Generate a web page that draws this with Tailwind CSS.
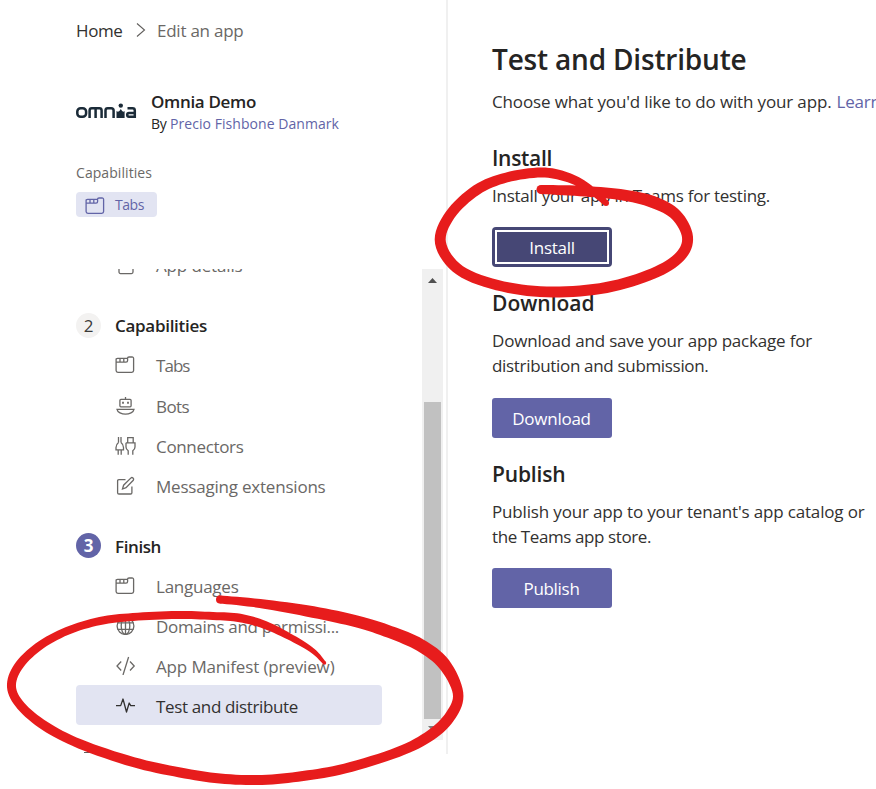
<!DOCTYPE html>
<html lang="en">
<head>
<meta charset="utf-8">
<title>Test and Distribute</title>
<script src="https://cdn.jsdelivr.net/npm/@tailwindcss/browser@4"></script>
</head>
<body class="relative h-[789px] w-[876px] overflow-hidden bg-white font-['Open_Sans','Noto_Sans',sans-serif] text-[17px] whitespace-nowrap text-[#252423]">
<svg class="hidden">
  <symbol id="tabs" viewBox="0 0 20 18" fill="none" stroke="currentColor" stroke-width="1.3">
    <path d="M1.1 2.6V14.6Q1.1 16.4 2.9 16.4H16.8Q18.6 16.4 18.6 14.6V2.6Q18.6 1 17 1H14Q12.6 1 12.4 2.4H2.6Q1.1 2.4 1.1 3.8M1.1 6.2H11Q12.6 6.2 12.6 4.6V2.4M5 2.4V6.2M8.8 2.4V6.2"/>
  </symbol>
</svg>
<div class="flex h-[754px]">
  <aside class="flex w-[448px] shrink-0 flex-col border-r-2 border-[#f0f0f0] pl-[76px]">
    <nav class="flex h-[62px] items-center">
      <span class="w-[60px] tracking-[-0.387px] text-[#323130]">Home</span>
      <svg class="mr-[11px] h-4 w-[10px] -translate-y-px" viewBox="0 0 10 16" fill="none" stroke="#605e5c" stroke-width="1.1"><path d="M1 1.5 8.500 8 1 14.5"/></svg>
      <span class="tracking-[-0.241px] text-[#6a6866]">Edit an app</span>
    </nav>
    <div class="mt-[29px] flex h-[42px] items-center">
      <svg class="mr-[14px] h-[16px] w-[61px] -translate-y-px" viewBox="0 0 61 16" fill="none" stroke="#1b2b38" stroke-width="2.5">
        <rect x="1.3" y="5.2" width="8.8" height="8.6" rx="3.4"/>
        <path d="M13.6 15V7.4Q13.6 5.2 15.8 5.2H23.4Q25.6 5.2 25.6 7.4V15M19.6 5.2V15M29.5 15V7.4Q29.5 5.2 31.7 5.2H35.2Q37.6 5.2 37.6 7.6V15"/>
        <circle cx="44.8" cy="2.6" r="2.2" fill="#1b2b38" stroke="none"/>
        <path d="M40.500 15V8Q42.8 10 44.8 6Q46.8 10 48.600 8V15Z" fill="#1b2b38" stroke="none"/>
        <path d="M51.5 5.2H56.5Q58.8 5.2 58.8 7.4V13.8H53Q51.2 13.8 51.2 11.8Q51.2 9.9 53 9.9H58.8"/>
      </svg>
      <div class="flex flex-col">
        <span class="h-[22px] leading-[22px] font-semibold tracking-[-0.328px]">Omnia Demo</span>
        <span class="h-[20px] text-[14px] leading-[22px]"><span class="tracking-[-0.234px]">By </span><span class="tracking-[0.055px] text-[#6264a7]">Precio Fishbone Danmark</span></span>
      </div>
    </div>
    <div class="mt-[30px] h-[20px] text-[14px] leading-[20px] tracking-[0.069px] text-[#6a6866]">Capabilities</div>
    <div class="mt-[9px] flex h-[25px] w-[81px] items-center rounded bg-[#e2e4f2] pl-[9px] text-[14px] text-[#6264a7]">
      <svg class="mt-[2px] mr-[10px] h-[18px] w-[20px]"><use href="#tabs"/></svg><span class="tracking-[-0.434px]">Tabs</span>
    </div>
    <div class="mt-[52px] flex h-[485px]">
      <div class="h-full w-[346px] overflow-hidden text-[#6a6866]">
        <div class="-mt-6 flex h-10 items-center pl-10">
          <svg class="mr-5 h-[20px] w-[20px]" viewBox="0 0 20 20" fill="none" stroke="currentColor" stroke-width="1.3"><rect x="3" y="3" width="14" height="15.6" rx="1.5"/></svg>
          <span class="pt-[2px] tracking-[-0.146px]">App details</span>
        </div>
        <div class="mt-5 flex h-10 items-center text-[#252423]">
          <span class="mr-[14px] flex size-[25px] items-center justify-center rounded-full bg-[#f3f2f1] pt-px text-[#3b3a39]">2</span>
          <span class="pt-[2px] font-semibold tracking-[-0.290px]">Capabilities</span>
        </div>
        <div class="flex h-10 items-center pl-[39px]">
          <svg class="mr-[21px] h-[18px] w-[20px]"><use href="#tabs"/></svg><span class="pt-[2px] tracking-[-0.953px]">Tabs</span>
        </div>
        <div class="flex h-10 items-center pl-10">
          <svg class="mt-px mr-5 h-[20px] w-[20px]" viewBox="0 0 20 20" fill="none" stroke="currentColor" stroke-width="1.3"><path d="M9.5 1v2.5"/><rect x="3.9" y="3.4" width="11.2" height="7.4" rx="1"/><path d="M1 13.3H18Q17.6 15.5 15 16.9Q12.5 18.2 9.5 18.2Q6.5 18.2 4 16.9Q1.4 15.5 1 13.3Z"/><path d="M6.1 6.8h1.8M11.1 6.8h1.8" stroke-width="2"/></svg>
          <span class="pt-1 tracking-[-0.594px]">Bots</span>
        </div>
        <div class="flex h-10 items-center pl-[39px]">
          <svg class="mt-[2px] mr-5 h-[20px] w-[21px]" viewBox="0 0 21 20" fill="none" stroke="currentColor" stroke-width="1.3"><path d="M3.5 1V6.5M6 1V6.5M3.5 6.5Q1 8.5 1 11.5V13.8H8.5V11.5Q8.5 8.5 6 6.5M3.2 14V18.8M6.2 14V18.800M12.7 6.8V1.6H18.2V6.8M11 6.8H20V11Q20 13.2 17.8 14.8V18.8M11 6.8V11Q11 13.2 13.2 14.8V18.8"/></svg>
          <span class="pt-1 tracking-[-0.331px]">Connectors</span>
        </div>
        <div class="flex h-10 items-center pl-10">
          <svg class="mt-[2px] mr-5 h-[20px] w-[20px]" viewBox="0 0 20 20" fill="none" stroke="currentColor" stroke-width="1.3"><path d="M9.5 3.6H2.9Q1.6 3.6 1.6 4.9V16.7Q1.6 18 2.9 18H14.6Q15.9 18 15.9 16.7V10.5M6.5 13 7.6 9.2 15 1.9Q15.9 1.1 17 2Q18.2 3.2 17.3 4.3L10 11.7Z"/></svg>
          <span class="pt-1 tracking-[-0.210px]">Messaging extensions</span>
        </div>
        <div class="mt-5 flex h-10 items-center text-[#252423]">
          <span class="mr-[14px] flex size-[25px] items-center justify-center rounded-full bg-[#6264a7] pt-px font-bold text-white">3</span>
          <span class="pt-1 font-semibold tracking-[-0.400px]">Finish</span>
        </div>
        <div class="flex h-10 items-center pl-[39px]">
          <svg class="mt-[2px] mr-[21px] h-[18px] w-[20px]"><use href="#tabs"/></svg><span class="pt-1 tracking-[-0.248px]">Languages</span>
        </div>
        <div class="flex h-10 items-center pl-10">
          <svg class="mr-5 h-[20px] w-[20px]" viewBox="0 0 20 20" fill="none" stroke="currentColor" stroke-width="1.3"><circle cx="9.5" cy="11" r="8.4"/><ellipse cx="9.5" cy="11" rx="4.3" ry="8.4"/><path d="M9.5 2v18M1.5 7.9H17.5M1.5 14.3H17.5"/></svg>
          <span class="pt-1 tracking-[-0.326px]">Domains and permissi...</span>
        </div>
        <div class="flex h-10 items-center pl-10">
          <svg class="mr-5 h-[20px] w-[20px]" viewBox="0 0 20 20" fill="none" stroke="currentColor" stroke-width="1.3"><path d="M5.2 6.5 1 11 5.2 15.5M14 6.5 18.200 11 14 15.5M12.6 2 7 20"/></svg>
          <span class="pt-1 tracking-[-0.145px]">App Manifest (preview)</span>
        </div>
        <div class="flex h-10 w-[306px] items-center rounded bg-[#e2e4f2] pl-10 text-[#323130]">
          <svg class="mr-5 h-[20px] w-[20px]" viewBox="0 0 20 20" fill="none" stroke="currentColor" stroke-width="1.3" stroke-linejoin="round"><path d="M0 10.6H4.7L7 4 10.5 17 13.2 8 14.7 10.6H19"/></svg>
          <span class="pt-1 tracking-[-0.353px]">Test and distribute</span>
        </div>
        <div class="mt-[27px] ml-2 h-px w-3 bg-[#605e5c]"></div>
      </div>
      <div class="flex h-[471px] w-[21px] flex-col items-center bg-[#f0f0f0] pt-[9px] pb-2">
        <svg class="h-[5px] w-[9px]" viewBox="0 0 9 5"><path d="M0 5 4.5 0 9 5Z" fill="#505050"/></svg>
        <div class="mt-[119px] h-[317px] w-[17px] bg-[#c1c1c1]"></div>
        <svg class="mt-[7px] h-[5px] w-[9px]" viewBox="0 0 9 5"><path d="M0 0H9L4.5 5Z" fill="#7d7d7d"/></svg>
      </div>
    </div>
  </aside>
  <main class="flex w-[428px] flex-col overflow-hidden pl-11 text-[#323130]">
    <h1 class="mt-[39px] h-[40px] text-[28px] leading-[40px] font-semibold tracking-[-0.185px] text-[#252423]">Test and Distribute</h1>
    <p class="mt-[10px] h-[25px] leading-[25px]"><span class="tracking-[-0.145px]">Choose what you'd like to do with your app.</span><span class="ml-[5px] tracking-[-0.200px] text-[#6264a7]">Learn more</span></p>
    <h2 class="mt-[29px] h-[30px] text-[21px] leading-[30px] font-semibold tracking-[-0.310px] text-[#252423]">Install</h2>
    <p class="mt-[10px] h-[25px] leading-[25px] tracking-[-0.269px]">Install your app in Teams for testing.</p>
    <button class="mt-[19px] h-10 w-[120px] rounded-[4px] bg-[#464775] p-[3px] text-white"><span class="flex h-full items-center justify-center border-2 border-white pt-px tracking-[-0.268px]">Install</span></button>
    <h2 class="mt-[21px] h-[30px] text-[21px] leading-[30px] font-semibold text-[#252423]">Download</h2>
    <p class="mt-[10px] leading-[25px]"><span class="tracking-[-0.192px]">Download and save your app package for</span><br><span class="tracking-[-0.325px]">distribution and submission.</span></p>
    <button class="mt-[20px] flex h-10 w-[120px] items-center justify-center rounded-[3px] bg-[#6264a7] pt-px pr-px tracking-[-0.254px] text-white">Download</button>
    <h2 class="mt-[21px] h-[30px] text-[21px] leading-[30px] font-semibold tracking-[-0.160px] text-[#252423]">Publish</h2>
    <p class="mt-[10px] leading-[25px]"><span class="tracking-[-0.163px]">Publish your app to your tenant's app catalog or</span><br><span class="tracking-[-0.404px]">the Teams app store.</span></p>
    <button class="mt-[19px] flex h-10 w-[120px] items-center justify-center rounded-[3px] bg-[#6264a7] pt-px pr-px tracking-[-0.310px] text-white">Publish</button>
  </main>
</div>
<svg class="pointer-events-none absolute top-0 left-0 h-[789px] w-[876px]" viewBox="0 0 876 789" id="ink" fill="#e71c1c"></svg>
<script>
// Hand-drawn marker strokes: each point is x, y, pen width.
const strokes = [
  [[220,599.5,8],[260,603.5,9],[313,612,11.5],[357,621.5,12],[390,632,12.5],[420,645,13],[444,664,12.5],[458,693,10.5],[451,715,11],[431,735,11],[398,752,10],[345,768.5,10],[303,776,10],[262,780,10],[220,778.5,10],[180,772.5,10],[133,762,10],[80,744,9.5],[45,726,9.5],[21,706,9],[11.5,687,9],[18,667,9],[38,647,8.5],[67,631,8],[100,621,8],[133,617,8],[177,615,8],[213,616,8],[240,618,8.5],[265,625,8],[292,638,6.5],[313,651,5],[324.5,663,3.5]],
  [[541,189.5,9],[580,191,10.5],[620,194.5,11],[653,202,12],[676,215,11.5],[687.5,237,11],[680,256.5,11],[653,273.5,11],[606.5,287.5,11],[553,292,11],[503,286.5,10.5],[460,270.5,10.5],[440.5,243,11],[450,215,10.5],[476.5,190,10.5],[506.5,177.5,10],[541.5,172.5,10],[566.5,177,9.5],[587,187,8],[606,203,6]]
];
const ns = 'http://www.w3.org/2000/svg', ink = document.getElementById('ink');
for (const p of strokes) {
  const s = [];
  for (let i = 0; i < p.length - 1; i++) {
    const a = p[Math.max(i - 1, 0)], b = p[i], c = p[i + 1], d = p[Math.min(i + 2, p.length - 1)];
    for (let n = 0; n < 8; n++) {
      const t = n / 8;
      s.push([0, 1, 2].map(k => 0.5 * (2 * b[k] + (c[k] - a[k]) * t + (2 * a[k] - 5 * b[k] + 4 * c[k] - d[k]) * t * t + (3 * b[k] - a[k] - 3 * c[k] + d[k]) * t * t * t)));
    }
  }
  s.push(p[p.length - 1]);
  const left = [], right = [];
  s.forEach((q, i) => {
    const u = s[Math.max(i - 1, 0)], v = s[Math.min(i + 1, s.length - 1)];
    const dx = v[0] - u[0], dy = v[1] - u[1], l = Math.hypot(dx, dy), h = q[2] / 2;
    left.push([q[0] - dy / l * h, q[1] + dx / l * h].map(n => n.toFixed(2)));
    right.unshift([q[0] + dy / l * h, q[1] - dx / l * h].map(n => n.toFixed(2)));
  });
  const path = document.createElementNS(ns, 'path');
  path.setAttribute('d', 'M' + left.concat(right).join('L') + 'Z');
  ink.append(path);
  for (const e of [s[0], s[s.length - 1]]) {
    const c = document.createElementNS(ns, 'circle');
    c.setAttribute('cx', e[0]); c.setAttribute('cy', e[1]); c.setAttribute('r', e[2] / 2);
    ink.append(c);
  }
}
</script>
</body>
</html>
